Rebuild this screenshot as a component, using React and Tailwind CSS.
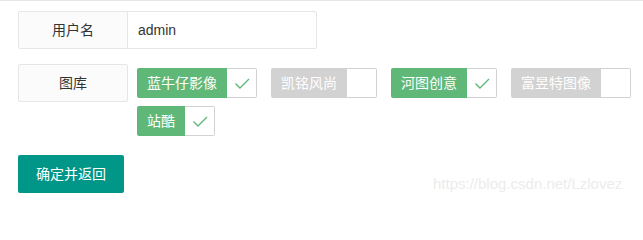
import React from 'react'

const sources = [
  { name: '蓝牛仔影像', checked: true },
  { name: '凯铭风尚', checked: false },
  { name: '河图创意', checked: true },
  { name: '富昱特图像', checked: false },
  { name: '站酷', checked: true },
]

const Check = ({ name, checked }) => (
  <div className="flex h-[30px] ml-[10px] mr-[4px] my-[4px] cursor-pointer">
    <span className={`px-[10px] h-full leading-[30px] text-[14px] text-white rounded-l-[2px] ${checked ? 'bg-[#5fb878]' : 'bg-[#d2d2d2]'}`}>
      {name}
    </span>
    <i className="w-[30px] h-full border border-l-0 border-[#d2d2d2] rounded-r-[2px] bg-white flex items-center justify-center">
      {checked && (
        <svg width="20" height="20" viewBox="0 0 20 20" fill="none">
          <path d="M3.5 10.5 L8 15 L17 6" stroke="#5fb878" strokeWidth="1.4" />
        </svg>
      )}
    </i>
  </div>
)

const App = () => {
  return (
    <div className="relative w-[643px] h-[203px] bg-white border-t border-[#e6e6e6] pl-[18px] pt-[10px] text-[14px] text-[#333] font-['Liberation_Sans','Noto_Sans_CJK_SC',sans-serif]">
      <div className="flex mb-[15px]">
        <label className="w-[110px] h-[38px] flex items-center justify-center border border-[#e6e6e6] bg-[#fbfbfb] rounded-l-[2px]">
          用户名
        </label>
        <input
          readOnly
          value="admin"
          className="w-[190px] h-[38px] -ml-px border border-[#e6e6e6] rounded-r-[2px] pl-[10px] text-[14px] text-[#333] outline-none"
        />
      </div>

      <div className="flex mb-[15px]">
        <label className="shrink-0 w-[110px] h-[38px] flex items-center justify-center border border-[#e6e6e6] bg-[#fbfbfb] rounded-[2px]">
          图库
        </label>
        <div className="-ml-px flex flex-wrap w-[510px]">
          {sources.map((s, index) => (
            <Check key={index} name={s.name} checked={s.checked} />
          ))}
        </div>
      </div>

      <button className="h-[38px] px-[18px] bg-[#009688] text-white text-[14px] rounded-[2px]">
        确定并返回
      </button>

      <div className="absolute left-[433px] top-[172px] text-[15px] text-[#ececec] font-['Liberation_Sans',sans-serif]">
        https://blog.csdn.net/Lzlovez
      </div>
    </div>
  )
}

export default App
